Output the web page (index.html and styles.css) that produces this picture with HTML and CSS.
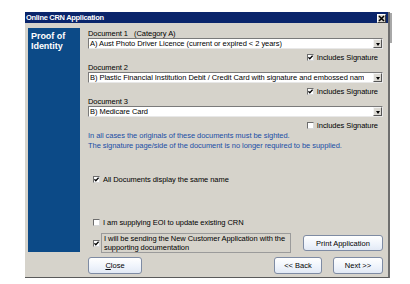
FILE: index.html
```html
<!DOCTYPE html>
<html lang="en">
<head>
    <meta charset="UTF-8">
    <title>Online CRN Application</title>
    <link rel="stylesheet" href="styles.css">
</head>
<body>
    <div class="window">
        <div class="titlebar">
            <span class="title">Online CRN Application</span>
            <span class="close-x">
                <svg width="7" height="7" viewBox="0 0 7 7"><path d="M1 1 L6 6 M6 1 L1 6" stroke="#000" stroke-width="1.6"/></svg>
            </span>
        </div>
        <div class="content">
            <div class="side">Proof of Identity</div>
            <div class="main">
                <div class="label">Document 1&nbsp;&nbsp;&nbsp;(Category A)</div>
                <div class="select"><span class="value">A) Aust Photo Driver Licence (current or expired &lt; 2 years)</span><span class="arrow"></span></div>
                <div class="sig"><span class="check on"><svg width="5" height="5" viewBox="0 0 5 5"><path d="M0.4 2.3 L1.8 3.8 L4.6 0.6" fill="none" stroke="#000" stroke-width="1.3"/></svg></span>Includes Signature</div>

                <div class="label">Document 2</div>
                <div class="select"><span class="value">B) Plastic Financial Institution Debit / Credit Card with signature and embossed nam</span><span class="arrow"></span></div>
                <div class="sig"><span class="check on"><svg width="5" height="5" viewBox="0 0 5 5"><path d="M0.4 2.3 L1.8 3.8 L4.6 0.6" fill="none" stroke="#000" stroke-width="1.3"/></svg></span>Includes Signature</div>

                <div class="label">Document 3</div>
                <div class="select"><span class="value">B) Medicare Card</span><span class="arrow"></span></div>
                <div class="sig"><span class="check"></span>Includes Signature</div>

                <p class="note">In all cases the originals of these documents must be sighted.<br>The signature page/side of the document is no longer required to be supplied.</p>

                <div class="opt same-name"><span class="check on"><svg width="5" height="5" viewBox="0 0 5 5"><path d="M0.4 2.3 L1.8 3.8 L4.6 0.6" fill="none" stroke="#000" stroke-width="1.3"/></svg></span>All Documents display the same name</div>

                <div class="opt eoi"><span class="check"></span>I am supplying EOI to update existing CRN</div>

                <div class="last-row">
                    <span class="check on"><svg width="5" height="5" viewBox="0 0 5 5"><path d="M0.4 2.3 L1.8 3.8 L4.6 0.6" fill="none" stroke="#000" stroke-width="1.3"/></svg></span>
                    <div class="sending">I will be sending the New Customer Application with the<br>supporting documentation</div>
                    <button class="btn print">Print Application</button>
                </div>
            </div>
        </div>
        <div class="footer">
            <button class="btn close"><u>C</u>lose</button>
            <div class="nav">
                <button class="btn back">&lt;&lt; Back</button>
                <button class="btn next">Next &gt;&gt;</button>
            </div>
        </div>
    </div>
    <div class="edge"></div>
</body>
</html>
```

FILE: styles.css
```css
body {
    margin: 0;
    background: #fff;
    font-family: "Liberation Sans", Arial, sans-serif;
    font-size: 7.5px;
    letter-spacing: -0.05px;
    color: #000;
    display: flex;
}

.window {
    margin: 12px 0 0 25px;
    width: 363px;
    height: 265px;
    background: #d6d3cb;
    border-right: 2px solid #6f6f6f;
    border-bottom: 1px solid #5a5a5a;
    display: flex;
    flex-direction: column;
}

.edge {
    width: 2px;
    height: 30px;
    margin-top: 13px;
    background: #a8a8a8;
}

.titlebar {
    height: 11px;
    background: #0a256b;
    color: #fff;
    display: flex;
    align-items: center;
    justify-content: space-between;
    padding: 0 2px 0 1px;
}

.title {
    font-weight: bold;
    font-size: 7.5px;
    letter-spacing: -0.3px;
}

.close-x {
    width: 7px;
    height: 7px;
    margin-top: 1px;
    background: #d6d3cb;
    border: 1px solid;
    border-color: #fff #404040 #404040 #fff;
    display: flex;
    align-items: center;
    justify-content: center;
}

.content {
    display: flex;
    padding: 5px 5px 0 3px;
    height: 224px;
}

.side {
    width: 52px;
    height: 224px;
    padding: 3px 0 0 3px;
    box-sizing: border-box;
    background: #0c4a87;
    color: #fff;
    font-weight: bold;
    font-size: 9px;
    line-height: 10px;
}

.main {
    flex: 1;
    margin-left: 8px;
    display: flex;
    flex-direction: column;
}

.label {
    height: 9px;
    line-height: 9px;
    margin-top: 1px;
}

.select {
    height: 11px;
    background: #fff;
    border: 1px solid;
    border-color: #7a7a7a #e8e8e8 #e8e8e8 #7a7a7a;
    box-sizing: border-box;
    display: flex;
    align-items: center;
    justify-content: space-between;
}

.select .value {
    padding-left: 1px;
    white-space: nowrap;
    overflow: hidden;
}

.select .arrow {
    width: 9px;
    height: 9px;
    flex: none;
    background: #dcdad4;
    border: 1px solid;
    border-color: #f4f4f4 #555 #555 #f4f4f4;
    box-sizing: border-box;
    position: relative;
}

.select .arrow::after {
    content: "";
    position: absolute;
    left: 1.5px;
    top: 2.5px;
    border-left: 2.5px solid transparent;
    border-right: 2.5px solid transparent;
    border-top: 3px solid #000;
}

.sig {
    height: 9px;
    margin-top: 4px;
    display: flex;
    align-items: center;
    justify-content: flex-end;
    padding-right: 5px;
}

.check {
    width: 7px;
    height: 7px;
    box-sizing: border-box;
    background: #fff;
    border: 1px solid;
    border-color: #6d6d6d #d8d8d8 #d8d8d8 #6d6d6d;
    margin-right: 3px;
    display: inline-flex;
    align-items: center;
    justify-content: center;
    flex: none;
}

.note {
    margin: 1px 0 0 0;
    color: #1a4ea6;
    line-height: 10px;
}

.opt {
    height: 9px;
    display: flex;
    align-items: center;
    padding-left: 5px;
}

.same-name {
    margin-top: 24px;
}

.eoi {
    margin-top: 34px;
}

.last-row {
    margin-top: 6px;
    height: 20px;
    display: flex;
    align-items: center;
    padding-left: 5px;
}

.last-row .check {
    margin-right: 1px;
}

.sending {
    width: 190px;
    height: 20px;
    box-sizing: border-box;
    border: 1px solid #9b9b9b;
    padding: 1px 0 0 2px;
    line-height: 8.5px;
    white-space: nowrap;
}

.btn {
    font-family: "Liberation Sans", Arial, sans-serif;
    font-size: 7.5px;
    color: #000;
    height: 17px;
    padding: 0;
    border: 1px solid #7e8ba3;
    border-radius: 3px;
    background: linear-gradient(#ffffff, #eef3fb 60%, #e2e9f5);
}

.print {
    width: 80px;
    height: 16px;
    margin-left: auto;
}

.footer {
    display: flex;
    justify-content: space-between;
    align-items: flex-start;
    padding: 5px 5px 0 63px;
}

.close {
    width: 54px;
}

.nav {
    display: flex;
    gap: 11px;
}

.back {
    width: 48px;
}

.next {
    width: 50px;
}
```
